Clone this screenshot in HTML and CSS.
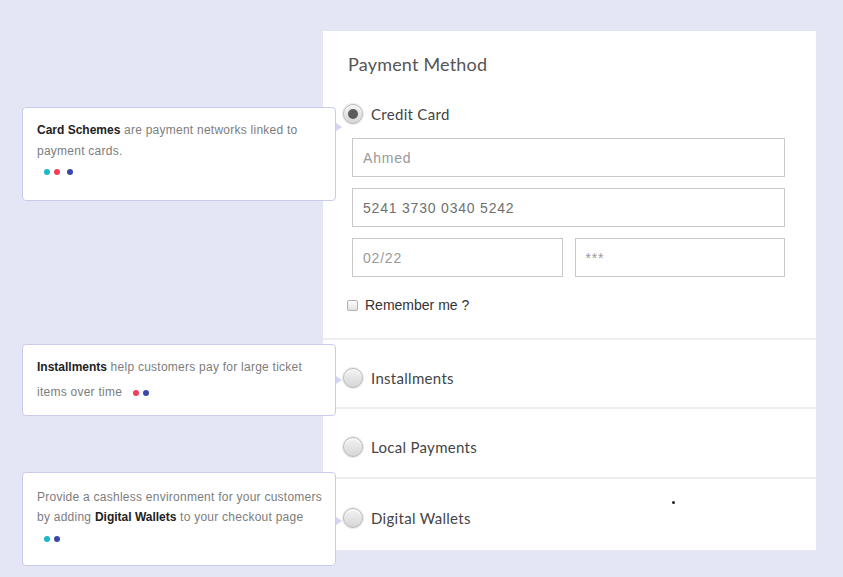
FILE: index.html
```html
<!DOCTYPE html>
<html lang="en">
<head>
<meta charset="utf-8">
<title>Payment Method</title>
<link rel="stylesheet" href="styles.css">
</head>
<body>
<div class="page">
  <section class="panel">
    <div class="cc-section">
      <h1 class="title">Payment Method</h1>
      <label class="option option-first">
        <span class="radio checked"></span>
        <span class="option-label">Credit Card</span>
      </label>
      <div class="fields">
        <div class="field full">Ahmed</div>
        <div class="field full dark">5241 3730 0340 5242</div>
        <div class="field-row">
          <div class="field">02/22</div>
          <div class="field">***</div>
        </div>
      </div>
      <label class="remember">
        <span class="checkbox"></span>
        <span>Remember me ?</span>
      </label>
    </div>
    <div class="row row-1">
      <span class="radio"></span>
      <span class="option-label">Installments</span>
    </div>
    <div class="row row-2">
      <span class="radio"></span>
      <span class="option-label">Local Payments</span>
    </div>
    <div class="row row-3">
      <span class="radio"></span>
      <span class="option-label">Digital Wallets</span>
      <span class="speck"></span>
    </div>
  </section>

  <div class="callout callout-1">
    <p class="line"><b>Card Schemes</b> are payment networks linked to payment cards.</p>
    <div class="dots dots-1"><i class="dot teal"></i><i class="dot red"></i><i class="dot blue"></i></div>
  </div>
  <div class="callout callout-2">
    <p class="line"><b>Installments</b> help customers pay for large ticket items over time <span class="dots dots-inline"><i class="dot red"></i><i class="dot blue"></i></span></p>
  </div>
  <div class="callout callout-3">
    <p class="line">Provide a cashless environment for your customers by adding <b>Digital Wallets</b> to your checkout page</p>
    <div class="dots dots-3"><i class="dot teal"></i><i class="dot blue"></i></div>
  </div>
</div>
</body>
</html>
```

FILE: styles.css
```css
* { box-sizing: border-box; }

html, body {
  margin: 0;
  padding: 0;
  background: #e5e6f5;
}

.page {
  position: relative;
  width: 843px;
  height: 577px;
  padding: 31px 0 0 323px;
}

.panel {
  width: 493px;
  height: 519px;
  background: #ffffff;
  display: flex;
  flex-direction: column;
}

.cc-section {
  height: 309px;
  padding: 22px 31px 0 20px;
  border-bottom: 2px solid #eeeeef;
  display: flex;
  flex-direction: column;
}

.title {
  margin: 0 0 0 5px;
  font-family: Lato, "Open Sans", sans-serif;
  font-weight: 400;
  font-size: 18px;
  letter-spacing: 0.2px;
  line-height: 22px;
  color: #555555;
}

.option {
  display: flex;
  align-items: center;
  gap: 8px;
}

.option-first {
  margin-top: 29px;
  height: 20px;
}

.option-label {
  font-family: Lato, "Open Sans", sans-serif;
  font-size: 15px;
  letter-spacing: 0.3px;
  color: #444444;
}

.radio {
  position: relative;
  width: 20px;
  height: 20px;
  flex: none;
  border-radius: 50%;
  border: 1px solid #b9b9b9;
  background: linear-gradient(#f3f3f3, #d6d6d6);
  box-shadow: 0 0 0 1px #ececec, inset 0 1px 1px #ffffff;
}

.radio.checked::after {
  content: "";
  position: absolute;
  left: 4px;
  top: 4px;
  width: 10px;
  height: 10px;
  border-radius: 50%;
  background: #5c5c5c;
}

.fields {
  margin: 14px 0 0 9px;
  display: flex;
  flex-direction: column;
  gap: 11px;
}

.field-row {
  display: flex;
  gap: 12px;
}

.field {
  flex: 1;
  height: 39px;
  border: 1px solid #c9c9c9;
  padding: 0 10px;
  display: flex;
  align-items: center;
  font-family: "Liberation Sans", Arial, sans-serif;
  font-size: 14px;
  letter-spacing: 0.8px;
  color: #9a9a9a;
}

.field.full { flex: none; }

.field.dark { color: #707070; }

.remember {
  margin: 20px 0 0 4px;
  display: flex;
  align-items: center;
  gap: 7px;
  font-family: "Liberation Sans", Arial, sans-serif;
  font-size: 14px;
  color: #333333;
}

.checkbox {
  width: 11px;
  height: 11px;
  border: 1px solid #b0b0b0;
  border-radius: 2px;
  background: linear-gradient(#fdfdfd, #e2e2e2);
}

.row {
  position: relative;
  display: flex;
  align-items: center;
  gap: 8px;
  padding: 8px 0 0 20px;
  border-bottom: 2px solid #eeeeef;
}

.row-1 { height: 69px; }
.row-2 { height: 70px; }
.row-3 { height: 69px; border-bottom: 0; }

.speck {
  position: absolute;
  left: 349px;
  top: 22px;
  width: 3px;
  height: 3px;
  border-radius: 50%;
  background: #222;
}

.callout {
  position: absolute;
  left: 22px;
  width: 314px;
  background: #ffffff;
  border: 1px solid #c9cbed;
  border-radius: 4px;
  padding: 0 8px 0 14px;
  font-family: "Liberation Sans", Arial, sans-serif;
  font-size: 12px;
  letter-spacing: 0.25px;
  color: #7d7d7d;
}

.callout::after {
  content: "";
  position: absolute;
  right: -7px;
  width: 0;
  height: 0;
  border-top: 4px solid transparent;
  border-bottom: 4px solid transparent;
  border-left: 6px solid #d3d5f1;
}

.callout b {
  color: #222222;
  font-weight: 700;
  letter-spacing: 0;
}

.line { margin: 0; }

.callout-1 {
  top: 107px;
  height: 94px;
  padding-top: 12px;
  line-height: 21px;
}
.callout-1::after { top: 15px; }

.callout-2 {
  top: 344px;
  height: 72px;
  padding-top: 10px;
  line-height: 25px;
}
.callout-2::after { top: 31px; }

.callout-3 {
  top: 472px;
  height: 94px;
  padding-top: 14px;
  line-height: 20px;
}
.callout-3::after { top: 44px; }

.dots {
  display: flex;
  align-items: center;
  gap: 4px;
}

.dots-1 { margin: 2px 0 0 7px; height: 16px; }
.dots-1 .dot.blue { margin-left: 3px; }

.dots-3 { margin: 4px 0 0 7px; height: 16px; }

.dots-inline {
  display: inline-flex;
  margin-left: 7px;
  vertical-align: middle;
}

.dot {
  display: block;
  width: 6px;
  height: 6px;
  border-radius: 50%;
}

.dot.teal { background: #19b9c9; }
.dot.red  { background: #f23d5b; }
.dot.blue { background: #3b47a9; }
```
